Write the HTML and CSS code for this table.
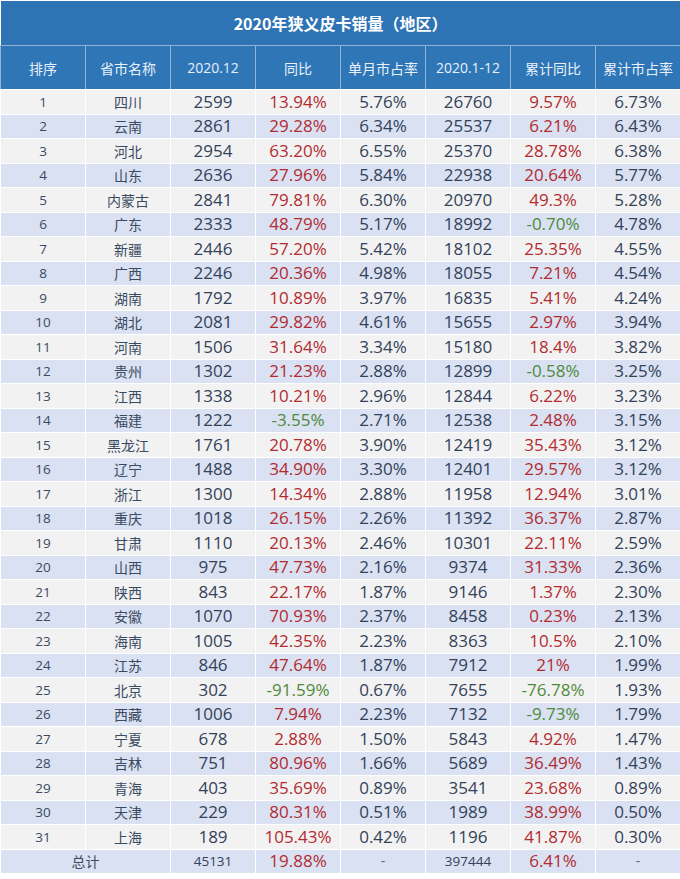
FILE: index.html
```html
<!DOCTYPE html>
<html lang="zh-CN">
<head>
<meta charset="utf-8">
<title>2020年狭义皮卡销量（地区）</title>
<link rel="stylesheet" href="styles.css">
</head>
<body>
<table class="sales">
<colgroup><col><col><col><col><col><col><col><col></colgroup>
<thead>
<tr class="title-row"><th colspan="8">2020年狭义皮卡销量（地区）</th></tr>
<tr class="head-row"><th>排序</th><th>省市名称</th><th>2020.12</th><th>同比</th><th>单月市占率</th><th>2020.1-12</th><th>累计同比</th><th>累计市占率</th></tr>
</thead>
<tbody>
<tr><td class="rk">1</td><td class="nm">四川</td><td>2599</td><td class="up">13.94%</td><td>5.76%</td><td>26760</td><td class="up">9.57%</td><td>6.73%</td></tr>
<tr><td class="rk">2</td><td class="nm">云南</td><td>2861</td><td class="up">29.28%</td><td>6.34%</td><td>25537</td><td class="up">6.21%</td><td>6.43%</td></tr>
<tr><td class="rk">3</td><td class="nm">河北</td><td>2954</td><td class="up">63.20%</td><td>6.55%</td><td>25370</td><td class="up">28.78%</td><td>6.38%</td></tr>
<tr><td class="rk">4</td><td class="nm">山东</td><td>2636</td><td class="up">27.96%</td><td>5.84%</td><td>22938</td><td class="up">20.64%</td><td>5.77%</td></tr>
<tr><td class="rk">5</td><td class="nm">内蒙古</td><td>2841</td><td class="up">79.81%</td><td>6.30%</td><td>20970</td><td class="up">49.3%</td><td>5.28%</td></tr>
<tr><td class="rk">6</td><td class="nm">广东</td><td>2333</td><td class="up">48.79%</td><td>5.17%</td><td>18992</td><td class="down">-0.70%</td><td>4.78%</td></tr>
<tr><td class="rk">7</td><td class="nm">新疆</td><td>2446</td><td class="up">57.20%</td><td>5.42%</td><td>18102</td><td class="up">25.35%</td><td>4.55%</td></tr>
<tr><td class="rk">8</td><td class="nm">广西</td><td>2246</td><td class="up">20.36%</td><td>4.98%</td><td>18055</td><td class="up">7.21%</td><td>4.54%</td></tr>
<tr><td class="rk">9</td><td class="nm">湖南</td><td>1792</td><td class="up">10.89%</td><td>3.97%</td><td>16835</td><td class="up">5.41%</td><td>4.24%</td></tr>
<tr><td class="rk">10</td><td class="nm">湖北</td><td>2081</td><td class="up">29.82%</td><td>4.61%</td><td>15655</td><td class="up">2.97%</td><td>3.94%</td></tr>
<tr><td class="rk">11</td><td class="nm">河南</td><td>1506</td><td class="up">31.64%</td><td>3.34%</td><td>15180</td><td class="up">18.4%</td><td>3.82%</td></tr>
<tr><td class="rk">12</td><td class="nm">贵州</td><td>1302</td><td class="up">21.23%</td><td>2.88%</td><td>12899</td><td class="down">-0.58%</td><td>3.25%</td></tr>
<tr><td class="rk">13</td><td class="nm">江西</td><td>1338</td><td class="up">10.21%</td><td>2.96%</td><td>12844</td><td class="up">6.22%</td><td>3.23%</td></tr>
<tr><td class="rk">14</td><td class="nm">福建</td><td>1222</td><td class="down">-3.55%</td><td>2.71%</td><td>12538</td><td class="up">2.48%</td><td>3.15%</td></tr>
<tr><td class="rk">15</td><td class="nm">黑龙江</td><td>1761</td><td class="up">20.78%</td><td>3.90%</td><td>12419</td><td class="up">35.43%</td><td>3.12%</td></tr>
<tr><td class="rk">16</td><td class="nm">辽宁</td><td>1488</td><td class="up">34.90%</td><td>3.30%</td><td>12401</td><td class="up">29.57%</td><td>3.12%</td></tr>
<tr><td class="rk">17</td><td class="nm">浙江</td><td>1300</td><td class="up">14.34%</td><td>2.88%</td><td>11958</td><td class="up">12.94%</td><td>3.01%</td></tr>
<tr><td class="rk">18</td><td class="nm">重庆</td><td>1018</td><td class="up">26.15%</td><td>2.26%</td><td>11392</td><td class="up">36.37%</td><td>2.87%</td></tr>
<tr><td class="rk">19</td><td class="nm">甘肃</td><td>1110</td><td class="up">20.13%</td><td>2.46%</td><td>10301</td><td class="up">22.11%</td><td>2.59%</td></tr>
<tr><td class="rk">20</td><td class="nm">山西</td><td>975</td><td class="up">47.73%</td><td>2.16%</td><td>9374</td><td class="up">31.33%</td><td>2.36%</td></tr>
<tr><td class="rk">21</td><td class="nm">陕西</td><td>843</td><td class="up">22.17%</td><td>1.87%</td><td>9146</td><td class="up">1.37%</td><td>2.30%</td></tr>
<tr><td class="rk">22</td><td class="nm">安徽</td><td>1070</td><td class="up">70.93%</td><td>2.37%</td><td>8458</td><td class="up">0.23%</td><td>2.13%</td></tr>
<tr><td class="rk">23</td><td class="nm">海南</td><td>1005</td><td class="up">42.35%</td><td>2.23%</td><td>8363</td><td class="up">10.5%</td><td>2.10%</td></tr>
<tr><td class="rk">24</td><td class="nm">江苏</td><td>846</td><td class="up">47.64%</td><td>1.87%</td><td>7912</td><td class="up">21%</td><td>1.99%</td></tr>
<tr><td class="rk">25</td><td class="nm">北京</td><td>302</td><td class="down">-91.59%</td><td>0.67%</td><td>7655</td><td class="down">-76.78%</td><td>1.93%</td></tr>
<tr><td class="rk">26</td><td class="nm">西藏</td><td>1006</td><td class="up">7.94%</td><td>2.23%</td><td>7132</td><td class="down">-9.73%</td><td>1.79%</td></tr>
<tr><td class="rk">27</td><td class="nm">宁夏</td><td>678</td><td class="up">2.88%</td><td>1.50%</td><td>5843</td><td class="up">4.92%</td><td>1.47%</td></tr>
<tr><td class="rk">28</td><td class="nm">吉林</td><td>751</td><td class="up">80.96%</td><td>1.66%</td><td>5689</td><td class="up">36.49%</td><td>1.43%</td></tr>
<tr><td class="rk">29</td><td class="nm">青海</td><td>403</td><td class="up">35.69%</td><td>0.89%</td><td>3541</td><td class="up">23.68%</td><td>0.89%</td></tr>
<tr><td class="rk">30</td><td class="nm">天津</td><td>229</td><td class="up">80.31%</td><td>0.51%</td><td>1989</td><td class="up">38.99%</td><td>0.50%</td></tr>
<tr><td class="rk">31</td><td class="nm">上海</td><td>189</td><td class="up">105.43%</td><td>0.42%</td><td>1196</td><td class="up">41.87%</td><td>0.30%</td></tr>
<tr class="total"><td class="nm" colspan="2">总计</td><td class="small">45131</td><td class="up">19.88%</td><td class="dash">-</td><td class="small">397444</td><td class="up">6.41%</td><td class="dash">-</td></tr>
<tr class="note"><td colspan="8">数据来源：中国汽车工业协会　制表：皮卡网　注：仅统计狭义皮卡上险数据</td></tr>
</tbody>
</table>
</body>
</html>
```
FILE: styles.css
```css
html, body {
  margin: 0;
  padding: 0;
  background: #ffffff;
}

.sales {
  width: 680px;
  border-collapse: collapse;
  table-layout: fixed;
  font-family: "Open Sans", "Noto Sans CJK SC", sans-serif;
  color: #33425a;
}

.sales col {
  width: 85px;
}

.sales th,
.sales td {
  border: 1px solid #ffffff;
  padding: 0;
  text-align: center;
  white-space: nowrap;
  overflow: hidden;
}

.title-row th {
  height: 44px;
  background: #2e74b5;
  color: #ffffff;
  font-family: "Noto Sans CJK SC", sans-serif;
  font-weight: 700;
  font-size: 16px;
  border-bottom: 1px solid #8fb3d9;
}

.head-row th {
  height: 43px;
  background: #2f76b7;
  color: #e8f0fa;
  font-family: "Open Sans", "Noto Sans CJK SC", sans-serif;
  font-weight: 400;
  font-size: 14px;
  border-left: 1px solid #8fb3d9;
  border-right: 1px solid #8fb3d9;
}

.sales tbody tr {
  height: 24.5px;
}

.sales tbody td {
  font-size: 17px;
  line-height: 20px;
  background: #f2f2f2;
}

.sales tbody tr:nth-child(even) td {
  background: #d9e1f2;
}

.sales tbody td.rk {
  font-size: 13.5px;
  color: #3a4a62;
}

.sales tbody td.nm {
  font-family: "Noto Sans CJK SC", sans-serif;
  font-size: 14px;
  color: #3a4a62;
}

.sales tbody td.up {
  color: #b22b2f;
}

.sales tbody td.down {
  color: #4f8a3c;
}

.sales tbody tr.total {
  height: 24px;
}

.sales tbody td.small {
  font-size: 13.5px;
}

.sales tbody td.dash {
  font-size: 14px;
  color: #5a6a80;
}

.sales tbody tr.note td {
  background: #ffffff;
  color: #e0342c;
  font-family: "Noto Sans CJK SC", sans-serif;
  font-size: 14px;
  height: 30px;
  padding-left: 20px;
}
```
